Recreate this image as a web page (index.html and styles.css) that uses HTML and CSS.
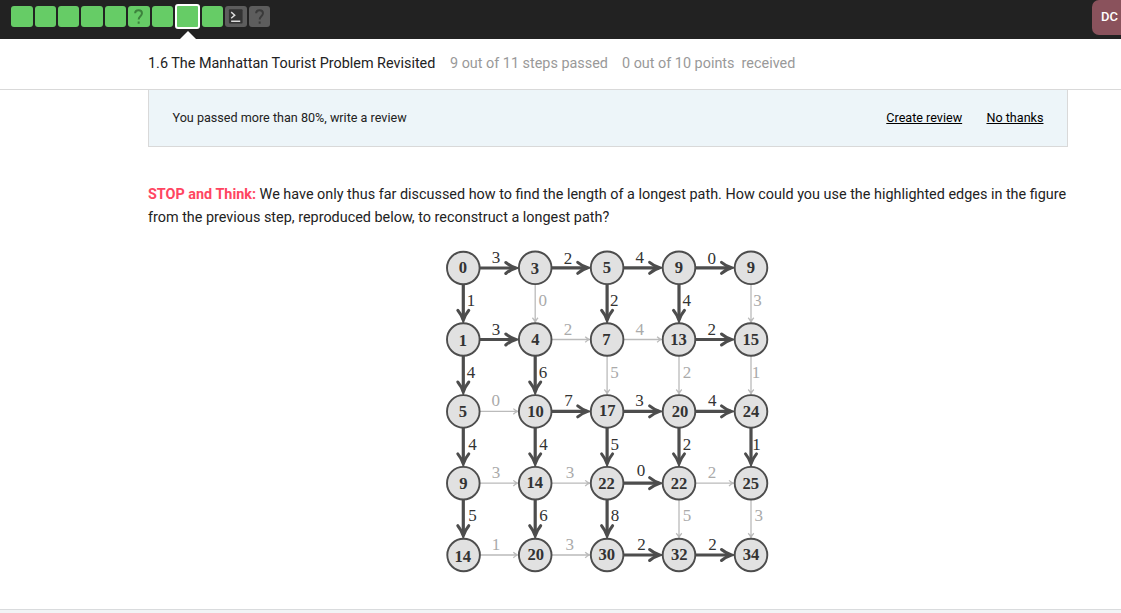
FILE: index.html
```html
<!DOCTYPE html>
<html lang="en">
<head>
<meta charset="utf-8">
<title>The Manhattan Tourist Problem Revisited</title>
<link rel="stylesheet" href="styles.css">
</head>
<body>
<header class="topbar">
  <nav class="steps">
    <span class="step"></span><span class="step"></span><span class="step"></span><span class="step"></span><span class="step"></span>
    <span class="step"><svg class="mark" viewBox="0 0 22 21"><path d="M7.3 7.2C7.3 3.1 14.3 3 14.3 7.3C14.3 10.2 10.9 10.3 10.9 13.6M10.9 15.7V18"/></svg></span>
    <span class="step"></span><span class="step active"></span><span class="step"></span>
    <span class="step locked"><svg class="terminal" viewBox="0 0 22 21"><rect x="4" y="3" width="14" height="14.6" rx="1"/><path d="M6.3 6L10 9.1L6.3 12.2M6.3 15.3H15.6"/></svg></span>
    <span class="step locked"><svg class="mark" viewBox="0 0 22 21"><path d="M7.3 7.2C7.3 3.1 14.3 3 14.3 7.3C14.3 10.2 10.9 10.3 10.9 13.6M10.9 15.7V18"/></svg></span>
  </nav>
  <div class="avatar">DC</div>
</header>
<div class="lesson">
  <span class="title">1.6 The Manhattan Tourist Problem Revisited</span>
  <span class="passed">9 out of 11 steps passed</span>
  <span class="points">0 out of 10 points&nbsp; received</span>
</div>
<main class="content">
  <section class="review">
    <span class="review-text">You passed more than 80%, write a review</span>
    <a class="create">Create review</a>
    <a class="dismiss">No thanks</a>
  </section>
  <p class="prompt"><span class="line"><strong>STOP and Think:</strong> We have only thus far discussed how to find the length of a longest path. How could you use the highlighted edges in the figure</span><br><span class="line second">from the previous step, reproduced below, to reconstruct a longest path?</span></p>
  <svg class="graph" viewBox="440 240 340 340">
    <defs>
      <g id="h"><path class="shaft" d="M16 0H52"/><path class="head" d="M42.5-5.5Q47-1.8 52.5 0Q47 1.8 42.5 5.5"/></g>
      <g id="v"><path class="shaft" d="M0 16V52"/><path class="head" d="M-5.5 42.5Q-1.8 47 0 52.5Q1.8 47 5.5 42.5"/></g>
      <g id="lh"><path class="thin" d="M16 0H54M50-2.8Q52-.8 54.5 0Q52 .8 50 2.8"/></g>
      <g id="lv"><path class="thin" d="M0 16V54M-2.8 50Q-.8 52 0 54.5Q.8 52 2.8 50"/></g>
      <circle id="n" class="node" r="16.3"/>
    </defs>
    <g>
      <use href="#h" x="463.3" y="268"/><use href="#h" x="535.2" y="267.8"/><use href="#h" x="607.1" y="267.8"/><use href="#h" x="679" y="267.8"/>
      <use href="#h" x="463.3" y="339.5"/><use href="#lh" x="535.2" y="339.5"/><use href="#lh" x="607.1" y="339.5"/><use href="#h" x="679" y="339.5"/>
      <use href="#lh" x="463.3" y="411.4"/><use href="#h" x="535.2" y="411.4"/><use href="#h" x="607.1" y="411.4"/><use href="#h" x="679" y="411.4"/>
      <use href="#lh" x="463.3" y="483.2"/><use href="#lh" x="535.2" y="483.2"/><use href="#h" x="607.1" y="483.2"/><use href="#lh" x="679" y="483.2"/>
      <use href="#lh" x="463.3" y="555"/><use href="#lh" x="535.2" y="555"/><use href="#h" x="607.1" y="555"/><use href="#h" x="679" y="555"/>
    </g>
    <g>
      <use href="#v" x="463.3" y="267.8"/><use href="#lv" x="535.2" y="267.8"/><use href="#v" x="607.1" y="267.8"/><use href="#v" x="679" y="267.8"/><use href="#lv" x="751" y="267.8"/>
      <use href="#v" x="463.3" y="339.5"/><use href="#v" x="535.2" y="339.5"/><use href="#lv" x="607.1" y="339.5"/><use href="#lv" x="679" y="339.5"/><use href="#lv" x="751" y="339.5"/>
      <use href="#v" x="463.3" y="411.4"/><use href="#v" x="535.2" y="411.4"/><use href="#v" x="607.1" y="411.4"/><use href="#v" x="679" y="411.4"/><use href="#v" x="751" y="411.4"/>
      <use href="#v" x="463.3" y="483.2"/><use href="#v" x="535.2" y="483.2"/><use href="#v" x="607.1" y="483.2"/><use href="#lv" x="679" y="483.2"/><use href="#lv" x="751" y="483.2"/>
    </g>
    <g>
      <use href="#n" x="463.3" y="268"/><use href="#n" x="535.2" y="267.8"/><use href="#n" x="607.1" y="267.8"/><use href="#n" x="679" y="267.8"/><use href="#n" x="751" y="267.8"/>
      <use href="#n" x="463.3" y="339.5"/><use href="#n" x="535.2" y="339.5"/><use href="#n" x="607.1" y="339.5"/><use href="#n" x="679" y="339.5"/><use href="#n" x="751" y="339.5"/>
      <use href="#n" x="463.3" y="411.4"/><use href="#n" x="535.2" y="411.4"/><use href="#n" x="607.1" y="411.4"/><use href="#n" x="679" y="411.4"/><use href="#n" x="751" y="411.4"/>
      <use href="#n" x="463.3" y="483.2"/><use href="#n" x="535.2" y="483.2"/><use href="#n" x="607.1" y="483.2"/><use href="#n" x="679" y="483.2"/><use href="#n" x="751" y="483.2"/>
      <use href="#n" x="463.6" y="555"/><use href="#n" x="535.2" y="555"/><use href="#n" x="607.1" y="555"/><use href="#n" x="679" y="555"/><use href="#n" x="751" y="555"/>
    </g>
    <g class="values">
      <text x="463" y="272.7">0</text><text x="535" y="274">3</text><text x="607" y="272.7">5</text><text x="679" y="272.7">9</text><text x="751" y="272.7">9</text>
      <text x="463" y="345.5">1</text><text x="535.3" y="345.3">4</text><text x="606.3" y="345">7</text><text x="678.5" y="345">13</text><text x="750.7" y="345">15</text>
      <text x="463" y="417">5</text><text x="535.5" y="417">10</text><text x="607.3" y="416">17</text><text x="680" y="417">20</text><text x="751" y="416.5">24</text>
      <text x="463.3" y="489">9</text><text x="534.7" y="488.4">14</text><text x="606.5" y="488.8">22</text><text x="679" y="488.8">22</text><text x="750.7" y="489">25</text>
      <text x="462.7" y="561.5">14</text><text x="535.7" y="560.3">20</text><text x="606.7" y="560.3">30</text><text x="679.3" y="560.3">32</text><text x="751" y="560.3">34</text>
    </g>
    <g class="weights">
      <text x="496" y="263">3</text><text x="568" y="264">2</text><text x="639.7" y="263">4</text><text x="711.7" y="263.5">0</text>
      <text x="496" y="335">3</text><text x="711.7" y="335">2</text>
      <text x="568.5" y="406.3">7</text><text x="639.5" y="406.3">3</text><text x="712.3" y="406.3">4</text>
      <text x="641" y="476">0</text>
      <text x="641.5" y="550">2</text><text x="712.5" y="550">2</text>
      <text x="471" y="305.7">1</text><text x="614.3" y="305.7">2</text><text x="686.7" y="305.7">4</text>
      <text x="471" y="377.7">4</text><text x="543" y="377.7">6</text>
      <text x="472.5" y="449.7">4</text><text x="543.5" y="449.7">4</text><text x="614.7" y="449.7">5</text><text x="687" y="449.7">2</text><text x="756.5" y="449.7">1</text>
      <text x="472.5" y="520.7">5</text><text x="543.5" y="520.7">6</text><text x="615" y="520.7">8</text>
    </g>
    <g class="weights light">
      <text x="568" y="335">2</text><text x="639.7" y="335">4</text><text x="495.7" y="406.3">0</text>
      <text x="496" y="478">3</text><text x="570" y="478">3</text><text x="712" y="478">2</text>
      <text x="496" y="550">1</text><text x="569.7" y="550">3</text>
      <text x="542.7" y="305.7">0</text><text x="757.5" y="305.7">3</text>
      <text x="614.5" y="377.7">5</text><text x="687" y="377.7">2</text><text x="756" y="377.7">1</text>
      <text x="687" y="520.7">5</text><text x="758.7" y="520.7">3</text>
    </g>
  </svg>
</main>
<footer class="bottom"></footer>
</body>
</html>
```
FILE: styles.css
```css
* { box-sizing: border-box; }
body {
  margin: 0;
  height: 613px;
  overflow: hidden;
  display: flex;
  flex-direction: column;
  background: #fff;
  color: #222;
  font-family: Roboto, sans-serif;
  font-size: 14.4px;
}
.topbar {
  height: 39px;
  flex: none;
  display: flex;
  justify-content: space-between;
  align-items: flex-start;
  background: #222;
}
.steps { display: flex; gap: 2px; align-items: center; padding: 4px 0 0 11.1px; height: 29px; }
.step { position: relative; width: 21.45px; height: 21px; border-radius: 3px; background: #6c6; }
.step.active { width: 24.5px; height: 25px; border: 2px solid #fff; }
.step.active::after {
  content: "";
  position: absolute;
  left: 2.5px;
  top: 25px;
  border: 8px solid transparent;
  border-top: 0;
  border-bottom-color: #fff;
}
.step.locked { background: #5d5d5d; }
.step svg { display: block; width: 21.5px; height: 21px; }
.mark path { fill: none; stroke: #3c823c; stroke-width: 2; }
.locked .mark path { stroke: #3a3a3a; }
.terminal rect { fill: #333; }
.terminal path { fill: none; stroke: #ddd; stroke-width: 1.4; }
.avatar {
  width: 29px;
  height: 35px;
  padding-left: 9px;
  line-height: 34px;
  border-radius: 7px 0 0 7px;
  background: #8a525c;
  color: #fff;
  font-size: 13px;
  font-weight: 500;
  overflow: hidden;
}
.lesson {
  height: 51px;
  flex: none;
  display: flex;
  padding-left: 148px;
  line-height: 49px;
  border-bottom: 1px solid #d9d9d9;
  white-space: nowrap;
}
.title { width: 302px; }
.passed { width: 172px; color: #999; }
.points { color: #999; }
.content { flex: 1; width: 920px; margin-left: 148px; }
.review {
  height: 57px;
  display: flex;
  align-items: center;
  padding: 0 23.5px 1px 23.5px;
  background: #edf5f9;
  border: 1px solid #d9d9d9;
  border-top: 0;
  font-size: 12.6px;
}
.review-text { flex: 1; }
.review a { color: #000; text-decoration: underline; }
.create { margin-right: 24.3px; }
.prompt { margin: 36px 0 0; height: 46px; line-height: 23px; white-space: nowrap; }
.prompt strong { color: #ff4561; font-weight: 700; }
.graph { display: block; width: 340px; height: 340px; margin: 11px 0 0 292px; }
.shaft, .head { fill: none; stroke: #4d4d4d; stroke-width: 3.2; }
.head { stroke-width: 3; stroke-linecap: round; }
.thin { fill: none; stroke: #bbb; stroke-width: 1.3; }
.node { fill: #e1e1e1; stroke: #4d4d4d; stroke-width: 1.9; }
.values, .weights { font-family: "Liberation Serif", serif; font-size: 16.6px; text-anchor: middle; fill: #333; }
.values { font-weight: 700; }
.weights { font-size: 17px; }
.weights.light { fill: #aaa; }
.bottom { height: 4px; flex: none; background: #f2f4f6; border-top: 1px solid #d9dbdd; }
```
